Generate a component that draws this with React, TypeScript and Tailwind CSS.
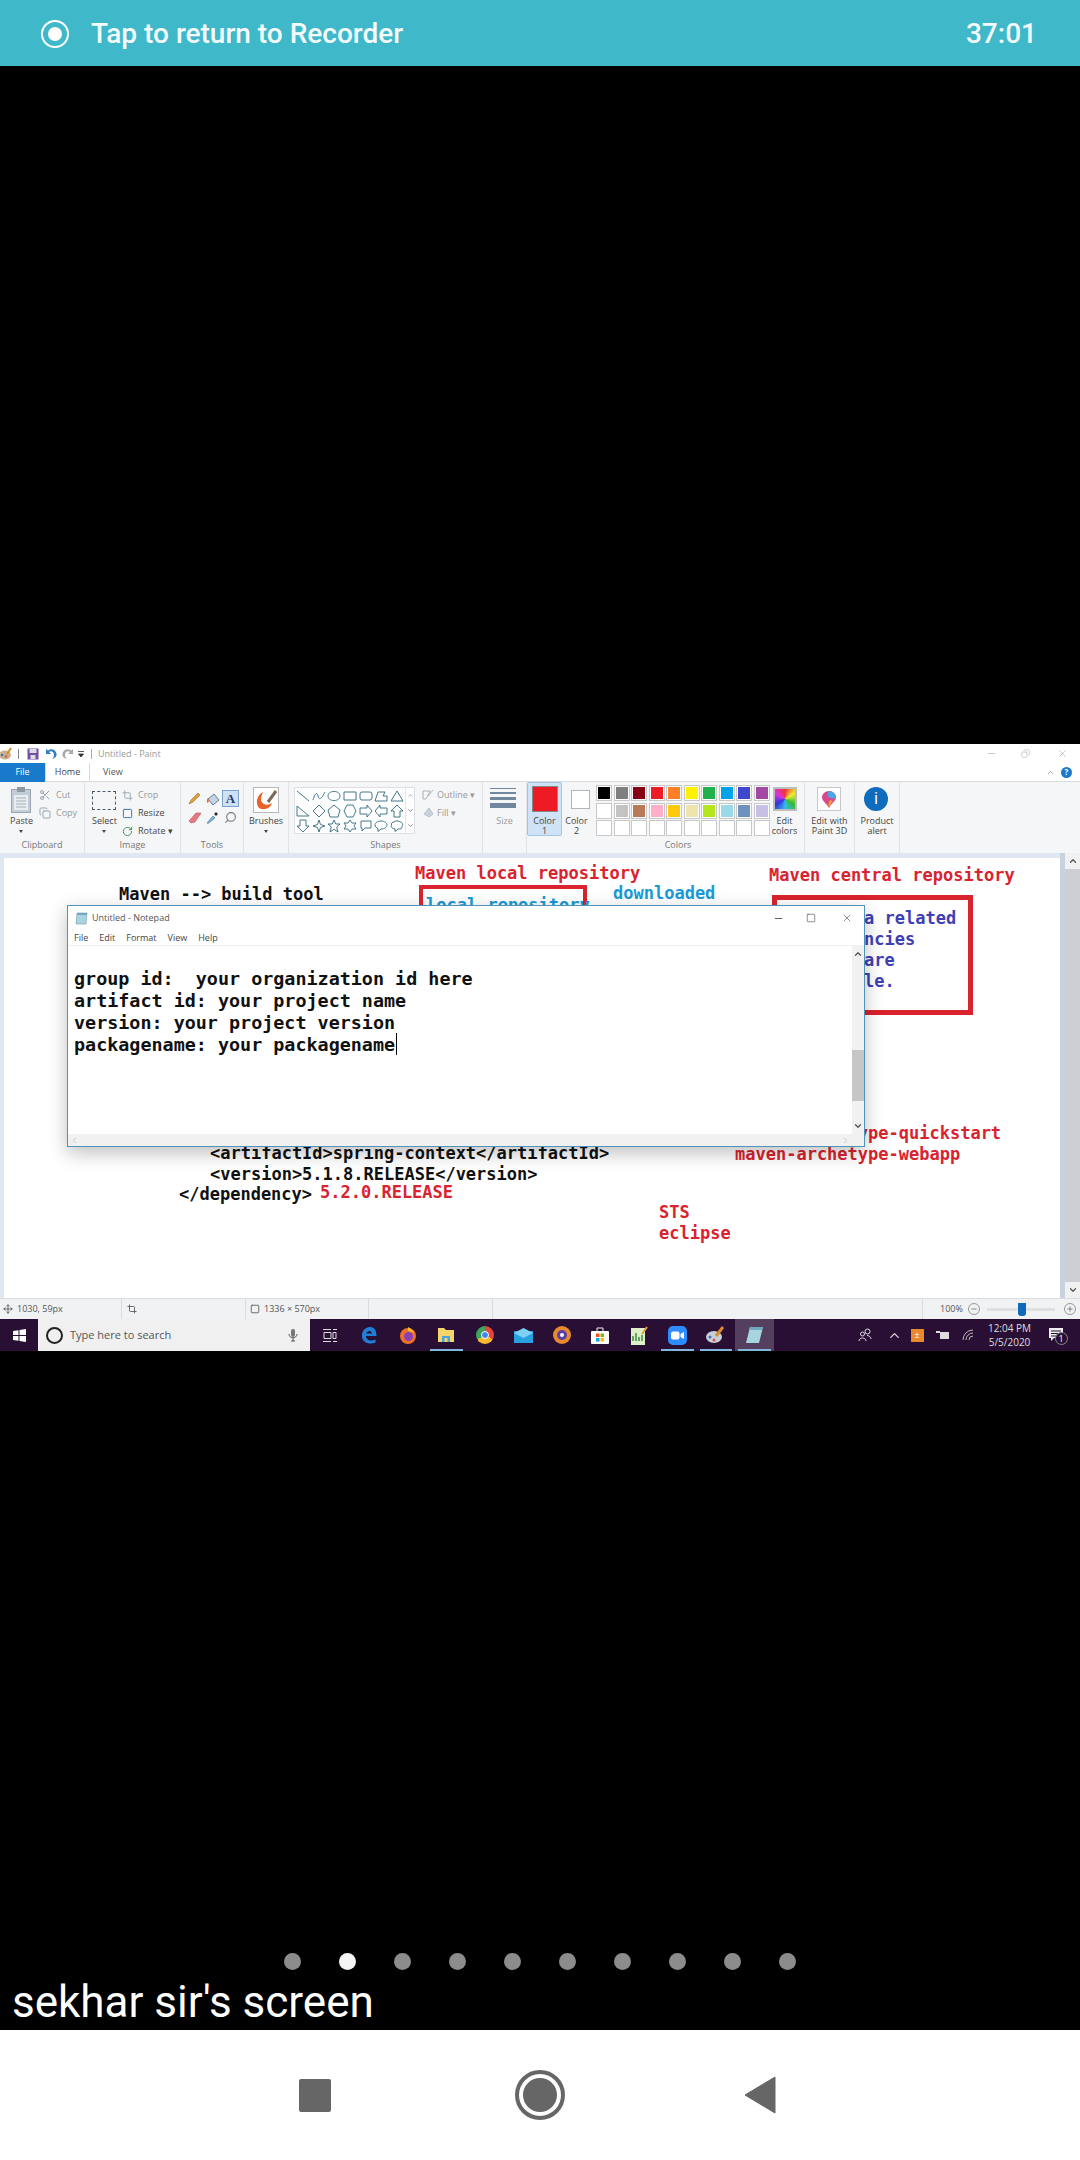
import { ChevronDown, ChevronLeft, ChevronRight, ChevronUp, Copy, Crop, Minus, Move, Plus, RotateCw, Scissors, Search, Square, X } from 'lucide-react'

const row1 = ['#000000', '#7f7f7f', '#880015', '#ed1c24', '#ff7f27', '#fff200', '#22b14c', '#00a2e8', '#3f48cc', '#a349a4']
const row2 = ['#ffffff', '#c3c3c3', '#b97a57', '#ffaec9', '#ffc90e', '#efe4b0', '#b5e61d', '#99d9ea', '#7092be', '#c8bfe7']
const row3 = ['', '', '', '', '', '', '', '', '', '']

// paint shapes gallery, 14x14 each
const shapes = [
  'M1 2L13 12',
  'M1 11C3 4 5 3 6 7S9 11 13 3',
  'M7 2.5C11 2.5 13 4.5 13 7S11 11.5 7 11.5 1 9.5 1 7 3 2.5 7 2.5Z',
  'M1 3H13V11H1Z',
  'M3 3H11Q13 3 13 5V9Q13 11 11 11H3Q1 11 1 9V5Q1 3 3 3Z',
  'M1 12L4 3H11L9 7H13V12Z',
  'M7 2L13 12H1Z',
  'M1 2L13 12H1Z',
  'M7 1L13 7 7 13 1 7Z',
  'M7 1L13 6 11 13H3L1 6Z',
  'M4 1H10L13 7 10 13H4L1 7Z',
  'M1 4H8V1L13 7 8 13V10H1Z',
  'M13 4H6V1L1 7 6 13V10H13Z',
  'M7 1L13 7H10V13H4V7H1Z',
  'M4 1H10V7H13L7 13 1 7H4Z',
  'M7 1L8.5 5.5 13 7 8.5 8.5 7 13 5.5 8.5 1 7 5.5 5.5Z',
  'M7 1L8.8 5H13L9.7 8 11 13 7 10.3 3 13 4.3 8 1 5H5.2Z',
  'M7 1L9 4H13L11 7 13 10H9L7 13 5 10H1L3 7 1 4H5Z',
  'M2 2H12V9H6L3 12V9H2Z',
  'M7 2C10.500 2 13 3.800 13 6S10.500 10 7 10L4 12.500V9.500C2.200 8.800 1 7.500 1 6 1 3.800 3.500 2 7 2Z',
  'M4 3C5 1.500 9 1.500 10 3 12.500 3 13.500 6 12 7.500 12.500 9.500 10 10.500 8.500 9.800L5 12.500V9.800C2.500 10 .5 8 1.500 6 1 4 2.500 3 4 3Z',
]

function GroupLabel({ children }: { children: string }) {
  return <div className="absolute bottom-[1px] left-0 right-0 text-center text-[9px] leading-[14px] text-[#777]">{children}</div>
}

function SmallAction({ label, dim, children }: { label: string; dim?: boolean; children: React.ReactNode }) {
  return (
    <div className={`flex h-[18px] items-center gap-[3px] text-[9px] ${dim ? 'text-[#999]' : 'text-[#444]'}`}>
      {children}
      <span>{label}</span>
    </div>
  )
}

function PaintTitleBar() {
  return (
    <div className="flex h-[19px] items-center bg-white text-[#9a9a9a]">
      <svg width="13" height="13" viewBox="0 0 13 13" className="ml-[-1px]">
        <ellipse cx="6" cy="8" rx="6" ry="4.500" fill="#c9b48f" />
        <circle cx="3" cy="8" r="1.200" fill="#3f6fc0" />
        <circle cx="7" cy="9.500" r="1.200" fill="#d9534f" />
        <path d="M8 7L12 1" stroke="#d98a2b" strokeWidth="2" />
      </svg>
      <div className="ml-[6px] h-[10px] w-px bg-[#888]" />
      <svg width="12" height="12" viewBox="0 0 12 12" className="ml-[8px]">
        <rect width="11" height="11" x=".5" y=".5" fill="#6e4fa3" />
        <rect width="7" height="4" x="2.500" y="1" fill="#ddd" />
        <rect width="5" height="4" x="3.500" y="7" fill="#ddd" />
      </svg>
      <svg width="12" height="12" viewBox="0 0 12 12" className="ml-[6px]">
        <path d="M1 1V6H6L4 4C6 2.500 9 3.500 9 7 9 8.500 8.500 9.500 7 11 11 10 12 7.500 11.500 5.500 10.500 1.500 6 0 3 2.500Z" fill="#2f7fc8" />
      </svg>
      <svg width="12" height="12" viewBox="0 0 12 12" className="ml-[5px]">
        <path d="M11 1V6H6L8 4C6 2.500 3 3.500 3 7 3 8.500 3.500 9.500 5 11 1 10 0 7.500 .5 5.500 1.500 1.500 6 0 9 2.500Z" fill="#a9a9a9" />
      </svg>
      <svg width="8" height="8" viewBox="0 0 8 8" className="ml-[3px]">
        <path d="M1 1.500H7M1.500 4H6.500L4 7Z" stroke="#333" fill="#333" strokeWidth=".8" />
      </svg>
      <div className="ml-[6px] h-[10px] w-px bg-[#aaa]" />
      <span className="ml-[6px] text-[9px]">Untitled - Paint</span>
      <div className="ml-auto flex items-center">
        <Minus size={11} className="mr-[24px] text-[#888]" strokeWidth={1} />
        <Copy size={9} className="mr-[27px] -scale-x-100 text-[#888]" strokeWidth={1} />
        <X size={11} className="mr-[12px] text-[#888]" strokeWidth={1} />
      </div>
    </div>
  )
}

function PaintTabs() {
  return (
    <div className="flex h-[19px] items-center border-b border-[#dadbdc] bg-white text-[9px]">
      <div className="flex h-[19px] w-[45px] items-center justify-center bg-[#1979ca] text-white">File</div>
      <div className="flex h-[19px] w-[45px] items-center justify-center border-x border-[#dadbdc] text-[#444]">Home</div>
      <div className="ml-[13px] text-[#555]">View</div>
      <div className="ml-auto mr-[8px] flex items-center gap-[6px]">
        <ChevronUp size={9} className="text-[#888]" />
        <div className="flex h-[11px] w-[11px] items-center justify-center rounded-full bg-[#1979ca] text-[8px] font-bold text-white">?</div>
      </div>
    </div>
  )
}

function Ribbon() {
  return (
    <div className="flex h-[71px] bg-[#f5f6f7] text-[#444] [&>div]:relative [&>div]:shrink-0">
      <div className="w-[85px] border-r border-[#e2e3e4]">
        <svg width="20" height="26" viewBox="0 0 20 26" className="absolute left-[11px] top-[5px]">
          <rect x=".5" y="2.500" width="19" height="23" fill="#c3cdd8" stroke="#9aa5b1" />
          <rect x="3" y="8" width="14" height="15" fill="#e9edf2" />
          <path d="M5 11H15M5 14H15M5 17H15M5 20H15" stroke="#a4afba" />
          <rect x="6" y="0" width="8" height="5" fill="#8e98a3" />
        </svg>
        <div className="absolute left-[10px] top-[32px] text-[9px] leading-[14px]">Paste</div>
        <div className="absolute left-[19px] top-[48px] h-0 w-0 border-x-[2.500px] border-t-[3px] border-x-transparent border-t-[#444]" />
        <div className="absolute left-[39px] top-[4px]">
          <SmallAction label="Cut" dim><Scissors size={12} className="mr-[2px] text-[#9aa5b1]" /></SmallAction>
          <SmallAction label="Copy" dim><Copy size={12} className="mr-[2px] text-[#9aa5b1]" /></SmallAction>
        </div>
        <GroupLabel>Clipboard</GroupLabel>
      </div>
      <div className="w-[96px] border-r border-[#e2e3e4]">
        <div className="absolute left-[7px] top-[9px] h-[19px] w-[24px] border border-dashed border-[#4a5a6a]" />
        <div className="absolute left-[7px] top-[32px] text-[9px] leading-[14px]">Select</div>
        <div className="absolute left-[17px] top-[48px] h-0 w-0 border-x-[2.500px] border-t-[3px] border-x-transparent border-t-[#444]" />
        <div className="absolute left-[37px] top-[4px]">
          <SmallAction label="Crop" dim><Crop size={11} className="mr-[2px] text-[#9aa5b1]" /></SmallAction>
          <SmallAction label="Resize"><Square size={11} className="mr-[2px] text-[#2f6aa8]" /></SmallAction>
          <SmallAction label="Rotate ▾"><RotateCw size={11} className="mr-[2px] text-[#3f8a5a]" /></SmallAction>
        </div>
        <GroupLabel>Image</GroupLabel>
      </div>
      <div className="w-[63px] border-r border-[#e2e3e4]">
        <div className="absolute left-[5px] top-[8px] grid grid-cols-3 gap-x-[1px] gap-y-[2px]">
          <div className="flex h-[17px] w-[17px] items-center justify-center">
            <svg width="13" height="13" viewBox="0 0 13 13"><path d="M1 12L3 8 10 1 12 3 5 10Z" fill="#e0a040" stroke="#9a6a20" strokeWidth=".6" /></svg>
          </div>
          <div className="flex h-[17px] w-[17px] items-center justify-center">
            <svg width="14" height="14" viewBox="0 0 14 14"><path d="M2 7L8 2 13 8 7 13Z" fill="#c5d4e4" stroke="#6a7f95" /><path d="M2 6C0 8 1 11 2 11 3 10 3 8 2 6Z" fill="#e0663a" /></svg>
          </div>
          <div className="flex h-[17px] w-[17px] items-center justify-center border border-[#7da2ce] bg-[#cfe0f3] font-['Liberation_Serif',serif] text-[13px] font-bold text-[#1e3a70]">A</div>
          <div className="flex h-[17px] w-[17px] items-center justify-center">
            <svg width="14" height="12" viewBox="0 0 14 12"><path d="M1 9L8 1H13L7 10 3 11Z" fill="#e87880" stroke="#b5555c" strokeWidth=".6" /></svg>
          </div>
          <div className="flex h-[17px] w-[17px] items-center justify-center">
            <svg width="13" height="13" viewBox="0 0 13 13"><path d="M1 12L7 5 9 7 2 12.500Z" fill="#7fb2dc" stroke="#44769f" strokeWidth=".6" /><path d="M8 3L10 1 12 3 10 5Z" fill="#333" /></svg>
          </div>
          <div className="flex h-[17px] w-[17px] items-center justify-center">
            <Search size={13} className="-scale-x-100 text-[#777]" />
          </div>
        </div>
        <GroupLabel>Tools</GroupLabel>
      </div>
      <div className="w-[45px] border-r border-[#e2e3e4]">
        <div className="absolute left-[9px] top-[5px] flex h-[26px] w-[26px] items-center justify-center border border-[#b8b8b8] bg-white">
          <svg width="24" height="24" viewBox="0 0 24 24">
            <path d="M9 4C3 7 1 15 5 20 10 23 17 20 18 15 14 18 8 17 7 12 7 9 8 6 9 4Z" fill="#e8622a" />
            <path d="M14 14L22 3" stroke="#7a6a58" strokeWidth="3" />
          </svg>
        </div>
        <div className="absolute left-0 right-0 top-[32px] text-center text-[9px] leading-[14px]">Brushes</div>
        <div className="absolute left-[20px] top-[48px] h-0 w-0 border-x-[2.500px] border-t-[3px] border-x-transparent border-t-[#444]" />
      </div>
      <div className="w-[194px] border-r border-[#e2e3e4]">
        <div className="absolute left-[5px] top-[5px] flex h-[47px] w-[121px] border border-[#dcdfe3] bg-white">
          <div className="grid w-[110px] grid-cols-7">
            {shapes.map((d, i) => (
              <div key={i} className="flex items-center justify-center">
                <svg width="14" height="14" viewBox="0 0 14 14">
                  <path d={d} fill="none" stroke="#2f6a7f" strokeWidth=".9" />
                </svg>
              </div>
            ))}
          </div>
          <div className="flex flex-1 flex-col items-center justify-around border-l border-[#e6e6e6] text-[#777]">
            <ChevronUp size={7} />
            <ChevronDown size={7} className="text-[#333]" />
            <ChevronDown size={7} className="text-[#333]" />
          </div>
        </div>
        <div className="absolute left-[133px] top-[4px]">
          <SmallAction label="Outline ▾" dim>
            <svg width="12" height="12" viewBox="0 0 12 12"><path d="M1 2H8L4 10H1ZM6 7L11 1" fill="none" stroke="#aab2bb" /></svg>
          </SmallAction>
          <SmallAction label="Fill ▾" dim>
            <svg width="12" height="12" viewBox="0 0 12 12"><path d="M2 7L7 1 11 7 7 10Z" fill="#c9d3dd" stroke="#a3acb6" strokeWidth=".6" /></svg>
          </SmallAction>
        </div>
        <GroupLabel>Shapes</GroupLabel>
      </div>
      <div className="w-[44px] border-r border-[#e2e3e4]">
        <div className="absolute left-[7px] top-[6px] flex w-[26px] flex-col gap-[3px]">
          <div className="h-px bg-[#71879f]" />
          <div className="h-[2px] bg-[#71879f]" />
          <div className="h-[3px] bg-[#71879f]" />
          <div className="h-[5px] bg-[#71879f]" />
        </div>
        <div className="absolute left-0 right-0 top-[32px] text-center text-[9px] leading-[14px] text-[#999]">Size</div>
      </div>
      <div className="h-[54px] w-[35px] rounded-[2px] border border-[#a4c5e6] bg-[#cfe3f7]">
        <div className="absolute left-[4px] top-[3px] h-[26px] w-[26px] border border-[#888] bg-[#ed1c24]" />
        <div className="absolute left-0 right-0 top-[33px] text-center text-[9px] leading-[10px]">Color<br />1</div>
      </div>
      <div className="w-[29px]">
        <div className="absolute left-[9px] top-[8px] h-[19px] w-[19px] border border-[#b5b5b5] bg-white" />
        <div className="absolute left-0 right-0 top-[34px] text-center text-[9px] leading-[10px]">Color<br />2</div>
      </div>
      <div className="w-[174px]">
        <div className="absolute left-[5px] top-[3px] flex flex-col gap-[1.500px]">
          {[row1, row2, row3].map((row, r) => (
            <div key={r} className="flex gap-[1.500px]">
              {row.map((c, i) => (
                <div key={i} className="h-[16px] w-[16px] border border-[#c8c8c8] bg-white p-[1px]">
                  {c && <div className="h-full w-full" style={{ backgroundColor: c }} />}
                </div>
              ))}
            </div>
          ))}
        </div>
        <GroupLabel>Colors</GroupLabel>
      </div>
      <div className="w-[40px] border-r border-[#e2e3e4]">
        <div className="absolute left-[8px] top-[5px] h-[24px] w-[24px] border-2 border-[#bdbdbd] bg-[conic-gradient(#e33,#ee3,#3b3,#3be,#33d,#d3d,#e33)]" />
        <div className="absolute left-0 right-0 top-[34px] text-center text-[9px] leading-[10px]">Edit<br />colors</div>
      </div>
      <div className="w-[50px] border-r border-[#e2e3e4]">
        <div className="absolute left-[12px] top-[5px] flex h-[24px] w-[24px] items-center justify-center border border-[#c8c8c8] bg-white">
          <svg width="16" height="19" viewBox="0 0 16 19">
            <path d="M8 1C12 1 15 4 15 7.500 15 11 10.500 13 8 18 5.500 13 1 11 1 7.500 1 4 4 1 8 1Z" fill="#d9478f" />
            <path d="M8 1C12 1 15 4 15 7.500 13 9 9 9 7 6 6.500 4 7 2 8 1Z" fill="#4aa8e8" />
            <path d="M8 18C7 15 7 12 9 10L12 11C10.500 13 9 15 8 18Z" fill="#f0a030" />
          </svg>
        </div>
        <div className="absolute left-0 right-0 top-[34px] text-center text-[9px] leading-[10px]">Edit with<br />Paint 3D</div>
      </div>
      <div className="w-[45px] border-r border-[#e2e3e4]">
        <div className="absolute left-[9px] top-[5px] flex h-[24px] w-[24px] items-center justify-center rounded-full bg-[#0f6cbd] font-['Liberation_Sans',sans-serif] text-[16px] text-white">i</div>
        <div className="absolute left-0 right-0 top-[34px] text-center text-[9px] leading-[10px]">Product<br />alert</div>
      </div>
    </div>
  )
}

function Notepad() {
  return (
    <div className="absolute left-[63px] top-[47px] flex h-[242px] w-[798px] flex-col border border-[#4f94b8] bg-white font-['Open_Sans',sans-serif] text-[9px] font-normal whitespace-normal shadow-[0_6px_18px_rgba(0,0,0,0.25)]">
      <div className="flex h-[23px] items-center pl-[7px] pt-[1px] text-[#555]">
        <svg width="13" height="13" viewBox="0 0 13 13">
          <path d="M2 1H12L11 12H1Z" fill="#a8d4e0" stroke="#7a9aa8" strokeWidth=".6" />
          <path d="M2 1H12V3H2Z" fill="#6fa8c0" />
        </svg>
        <span className="ml-[4px]">Untitled - Notepad</span>
        <div className="ml-auto flex items-center">
          <Minus size={11} className="mr-[22px] text-[#111]" strokeWidth={1.500} />
          <Square size={10} className="mr-[25px] text-[#222]" strokeWidth={1.200} />
          <X size={12} className="mr-[11px] text-[#222]" strokeWidth={1} />
        </div>
      </div>
      <div className="flex h-[17px] gap-[11px] border-b border-[#f0f0f0] pl-[6px] leading-[17px] text-[#444]">
        <span>File</span>
        <span>Edit</span>
        <span>Format</span>
        <span>View</span>
        <span>Help</span>
      </div>
      <div className="flex min-h-0 flex-1">
        <div className="flex-1 whitespace-pre pl-[6px] pt-[22px] font-['DejaVu_Sans_Mono',monospace] text-[18.400px] font-bold leading-[22px] text-[#111]">
          <div>group id:  your organization id here</div>
          <div>artifact id: your project name</div>
          <div>version: your project version</div>
          <div className="relative w-fit">
            packagename: your packagename
            <div className="absolute right-[-2px] top-[-1px] h-[22px] w-px bg-black" />
          </div>
        </div>
        <div className="flex w-[12px] flex-col items-center justify-between bg-[#f1f1f1] py-[3px] text-[#555]">
          <ChevronUp size={10} strokeWidth={3} />
          <div className="mt-[70px] h-[51px] w-full bg-[#c6c6c6]" />
          <ChevronDown size={10} strokeWidth={3} />
        </div>
      </div>
      <div className="flex h-[12px] items-center justify-between bg-[#f1f1f1] px-[2px] text-[#bbb]">
        <ChevronLeft size={9} />
        <ChevronRight size={9} className="mr-[12px]" />
      </div>
    </div>
  )
}

function CanvasArea() {
  return (
    <div className="flex h-[445px] bg-[#dfe7f3]">
      <div className="relative mb-0 ml-[4px] mt-[5px] flex-1 overflow-hidden bg-white font-['DejaVu_Sans_Mono',monospace] text-[17px] font-bold leading-[20px] whitespace-pre">
        <div className="absolute left-[115px] top-[26px] text-[#111]">Maven --&gt; build tool</div>
        <div className="absolute left-[411px] top-[5px] text-[#d9232e]">Maven local repository</div>
        <div className="absolute left-[415px] top-[27px] h-[60px] w-[168px] border-[4px] border-[#d9232e]" />
        <div className="absolute left-[422px] top-[37px] text-[#1a9ad6]">local repository</div>
        <div className="absolute left-[609px] top-[25px] text-[#1a9ad6]">downloaded</div>
        <div className="absolute left-[765px] top-[7px] text-[#d9232e]">Maven central repository</div>
        <div className="absolute left-[768px] top-[37px] h-[120px] w-[201px] border-[5px] border-[#d9232e]" />
        <div className="absolute left-[860px] top-[50px] text-[#3f3fb5]">a related</div>
        <div className="absolute left-[860px] top-[71px] text-[#3f3fb5]">ncies</div>
        <div className="absolute left-[860px] top-[92px] text-[#3f3fb5]">are</div>
        <div className="absolute left-[860px] top-[113px] text-[#3f3fb5]">le.</div>
        <div className="absolute left-[731px] top-[265px] text-[#d9232e]">maven-archetype-quickstart</div>
        <div className="absolute left-[731px] top-[286px] text-[#d9232e]">maven-archetype-webapp</div>
        <div className="absolute left-[206px] top-[285px] text-[#111]">&lt;artifactId&gt;spring-context&lt;/artifactId&gt;</div>
        <div className="absolute left-[206px] top-[306px] text-[#111]">&lt;version&gt;5.1.8.RELEASE&lt;/version&gt;</div>
        <div className="absolute left-[175px] top-[326px] text-[#111]">&lt;/dependency&gt;</div>
        <div className="absolute left-[316px] top-[324px] text-[#d9232e]">5.2.0.RELEASE</div>
        <div className="absolute left-[655px] top-[344px] text-[#d9232e]">STS</div>
        <div className="absolute left-[655px] top-[365px] text-[#d9232e]">eclipse</div>
        <Notepad />
      </div>
      <div className="w-[5px] bg-[#c9d3e0]" />
      <div className="flex w-[15px] flex-col items-center justify-between bg-[#cdcfd2] text-[#555]">
        <div className="flex h-[16px] w-full items-center justify-center bg-[#f1f1f1]">
          <ChevronUp size={10} strokeWidth={3} />
        </div>
        <div className="flex h-[16px] w-full items-center justify-center bg-[#f1f1f1]">
          <ChevronDown size={10} strokeWidth={3} />
        </div>
      </div>
    </div>
  )
}

function StatusBar() {
  return (
    <div className="flex h-[21px] items-center border-t border-[#dadbdc] bg-[#f1f2f3] text-[9px] text-[#555]">
      <div className="flex h-full w-[122px] items-center gap-[4px] border-r border-[#dcdcdc] pl-[3px]">
        <Move size={10} />
        <span>1030, 59px</span>
      </div>
      <div className="flex h-full w-[124px] items-center border-r border-[#dcdcdc] pl-[5px]">
        <Crop size={10} />
      </div>
      <div className="flex h-full w-[123px] items-center gap-[4px] border-r border-[#dcdcdc] pl-[4px]">
        <Square size={10} />
        <span>1336 × 570px</span>
      </div>
      <div className="h-full w-[124px] border-r border-[#dcdcdc]" />
      <div className="h-full w-[430px] border-r border-[#dcdcdc]" />
      <span className="ml-[17px]">100%</span>
      <div className="ml-[5px] flex h-[12px] w-[12px] items-center justify-center rounded-full border border-[#999]">
        <Minus size={8} />
      </div>
      <div className="relative ml-[7px] h-[3px] w-[68px] bg-[#dfe0e1]">
        <div className="absolute left-[31px] top-[-5px] h-[13px] w-[8px] rounded-b-[3px] bg-[#0f6cbd]" />
      </div>
      <div className="ml-[9px] flex h-[12px] w-[12px] items-center justify-center rounded-full border border-[#999]">
        <Plus size={8} />
      </div>
    </div>
  )
}

function TaskIcon({ active, open, children }: { active?: boolean; open?: boolean; children: React.ReactNode }) {
  return (
    <div className={`relative flex h-full w-[38.500px] items-center justify-center ${active ? 'bg-[#54405e]' : ''}`}>
      {children}
      {open && <div className="absolute bottom-0 left-[3px] right-[3px] h-[2px] bg-[#7fb6dc]" />}
    </div>
  )
}

function Taskbar() {
  return (
    <div className="flex h-[32px] items-center bg-[#2a0f35] text-white">
      <div className="flex h-full w-[38px] items-center justify-center">
        <svg width="13" height="13" viewBox="0 0 13 13" fill="#fff">
          <path d="M0 2L5.500 1.200V6H0ZM6.500 1L13 0V6H6.500ZM0 7H5.500V11.800L0 11ZM6.500 7H13V13L6.500 12Z" />
        </svg>
      </div>
      <div className="flex h-full w-[272px] items-center bg-[#f0f0f0] pl-[8px] text-[11px] text-[#555]">
        <div className="h-[17px] w-[17px] rounded-full border-[2.500px] border-[#222]" />
        <span className="ml-[7px]">Type here to search</span>
        <svg width="10" height="14" viewBox="0 0 10 14" className="ml-auto mr-[12px]">
          <rect x="3" y="1" width="4" height="8" rx="2" fill="#777" />
          <path d="M1 6C1 11 9 11 9 6M5 10V13M3 13H7" fill="none" stroke="#555" />
        </svg>
      </div>
      <div className="flex h-full w-[40px] items-center justify-center">
        <svg width="14" height="13" viewBox="0 0 14 13" fill="none" stroke="#ddd">
          <path d="M0 .5H8M10 .5H14M1 3.500H8V9.500H1ZM0 12.500H8M10 3.500H13V9.500H10ZM10 12.500H14" />
        </svg>
      </div>
      <TaskIcon>
        <svg width="16" height="18" viewBox="0 0 16 18">
          <path d="M1 8C2 3 6 1 9 1 13 1 15.500 4 15.500 10H5C5 14 10 16 14.500 13.500V16.500C9 19 1 17 1 10 1 9 1 8.500 1 8ZM5.200 7.500H11C11 4 6 4 5.200 7.500Z" fill="#1f7fd6" />
        </svg>
      </TaskIcon>
      <TaskIcon>
        <svg width="18" height="18" viewBox="0 0 18 18">
          <circle cx="9" cy="10" r="8" fill="#f0702a" />
          <path d="M9 1C12 3 14 4 15 7 12 5 10 6 9 4Z" fill="#ffc02a" />
          <circle cx="9.500" cy="10.500" r="4.500" fill="#8a3fb5" />
        </svg>
      </TaskIcon>
      <TaskIcon open>
        <svg width="18" height="16" viewBox="0 0 18 16">
          <path d="M1 1H7L9 3H17V15H1Z" fill="#f5d56a" />
          <rect x="5" y="9" width="8" height="6" fill="#4aa3df" />
          <rect x="7.500" y="11" width="3" height="4" fill="#f5d56a" />
        </svg>
      </TaskIcon>
      <TaskIcon>
        <div className="flex h-[18px] w-[18px] items-center justify-center rounded-full bg-[conic-gradient(#e8453c_0_33%,#f9bb2d_33%_66%,#3ba55c_66%_100%)]">
          <div className="h-[8px] w-[8px] rounded-full border border-white bg-[#4285f4]" />
        </div>
      </TaskIcon>
      <TaskIcon>
        <svg width="19" height="15" viewBox="0 0 19 15">
          <rect y="3" width="19" height="12" fill="#29a0e0" />
          <path d="M0 5L9.500 0 19 5 9.500 10Z" fill="#7fd0f5" />
        </svg>
      </TaskIcon>
      <TaskIcon>
        <div className="flex h-[18px] w-[18px] items-center justify-center rounded-full bg-[#e8892a]">
          <div className="flex h-[10px] w-[10px] items-center justify-center rounded-full bg-[#5a3fa8]">
            <div className="h-[4px] w-[4px] rounded-full bg-white" />
          </div>
        </div>
      </TaskIcon>
      <TaskIcon>
        <svg width="18" height="18" viewBox="0 0 18 18">
          <path d="M6 5V2H12V5" fill="none" stroke="#eee" />
          <rect y="5" width="18" height="13" rx="1" fill="#fff" />
          <rect x="5" y="7.500" width="3.500" height="3.500" fill="#f25022" />
          <rect x="9.500" y="7.500" width="3.500" height="3.500" fill="#7fba00" />
          <rect x="5" y="12" width="3.500" height="3.500" fill="#00a4ef" />
          <rect x="9.500" y="12" width="3.500" height="3.500" fill="#ffb900" />
        </svg>
      </TaskIcon>
      <TaskIcon>
        <svg width="18" height="19" viewBox="0 0 18 19">
          <rect x="1" y="2" width="14" height="17" fill="#dff0c8" />
          <path d="M3 15V10M6 15V7M9 15V11M12 15V9" stroke="#3f8a3f" strokeWidth="1.500" />
          <path d="M12 8L17 1" stroke="#e0a030" strokeWidth="2" />
        </svg>
      </TaskIcon>
      <TaskIcon open>
        <div className="flex h-[19px] w-[19px] items-center justify-center rounded-[5px] bg-[#2d8cff]">
          <svg width="13" height="9" viewBox="0 0 13 9" fill="#fff">
            <rect width="8.500" height="8" y=".5" rx="2" />
            <path d="M9.500 3L13 1V8L9.500 6Z" />
          </svg>
        </div>
      </TaskIcon>
      <TaskIcon open>
        <svg width="20" height="18" viewBox="0 0 20 18">
          <ellipse cx="8" cy="11" rx="8" ry="6" fill="#c9cfd6" />
          <circle cx="4" cy="11" r="1.500" fill="#3f6fc0" />
          <circle cx="8" cy="14" r="1.500" fill="#d9534f" />
          <path d="M10 10L17 1" stroke="#d98a2b" strokeWidth="3" />
        </svg>
      </TaskIcon>
      <TaskIcon active open>
        <svg width="17" height="18" viewBox="0 0 17 18">
          <path d="M4 1H17L13 17H0Z" fill="#a8d4e0" />
          <path d="M4 1H17L16 4H3Z" fill="#6fa8c0" />
        </svg>
      </TaskIcon>
      <svg width="14" height="14" viewBox="0 0 14 14" fill="none" stroke="#ddd" className="ml-[84px]">
        <circle cx="9.500" cy="3.500" r="2.500" />
        <circle cx="4.500" cy="6" r="2" />
        <path d="M1 13C1 9 8 9 8 13M9 7.500C11 7.500 13 9 13 11" />
      </svg>
      <ChevronUp size={15} className="ml-[15px] text-[#ddd]" />
      <div className="ml-[9px] flex h-[13px] w-[13px] items-center justify-center bg-[#e8892a] text-[9px] text-white">±</div>
      <svg width="14" height="10" viewBox="0 0 14 10" className="ml-[12px]" fill="#ddd">
        <path d="M0 1H4V3H0ZM4 2H13V9H4Z" />
      </svg>
      <svg width="12" height="12" viewBox="0 0 12 12" className="ml-[12px]" fill="none" stroke="#bbb">
        <path d="M1 11A10 10 0 0 1 11 1M4 11A7 7 0 0 1 11 4M7 11A4 4 0 0 1 11 7" />
      </svg>
      <div className="ml-[11px] w-[50px] text-center text-[10px] leading-[14px] text-[#ddd]">
        <div>12:04 PM</div>
        <div>5/5/2020</div>
      </div>
      <div className="relative ml-[14px]">
        <svg width="15" height="14" viewBox="0 0 15 14">
          <path d="M0 0H14V10H5L2 13V10H0Z" fill="#eee" />
          <path d="M2 3H12M2 5.500H12M2 8H9" stroke="#2a0f35" />
        </svg>
        <div className="absolute left-[6px] top-[4px] flex h-[13px] w-[13px] items-center justify-center rounded-full border border-[#888] bg-[#2a0f35] text-[9px]">1</div>
      </div>
    </div>
  )
}

export default function App() {
  const dots = [0, 1, 2, 3, 4, 5, 6, 7, 8, 9]

  return (
    <div className="flex h-[2160px] w-[1080px] flex-col overflow-hidden bg-black">
      <div className="flex h-[66px] items-center justify-between pt-[2px] bg-[#3fb8ca] pl-[41px] pr-[43px] font-['Roboto',sans-serif] text-[28px] font-medium text-[#f4fbfc]">
        <div className="flex items-center gap-[22px]">
          <div className="flex h-[28px] w-[28px] items-center justify-center rounded-full border-2 border-white">
            <div className="h-[14px] w-[14px] rounded-full bg-white" />
          </div>
          <span>Tap to return to Recorder</span>
        </div>
        <span>37:01</span>
      </div>

      <div className="mt-[678px] flex h-[607px] flex-col overflow-hidden font-['Open_Sans',sans-serif]">
        <PaintTitleBar />
        <PaintTabs />
        <Ribbon />
        <CanvasArea />
        <StatusBar />
        <Taskbar />
      </div>

      <div className="mt-[602px] flex h-[17px] gap-[38px] pl-[284px]">
        {dots.map((d) => (
          <div key={d} className={`h-[17px] w-[17px] rounded-full ${d === 1 ? 'bg-[#f5f5f5]' : 'bg-[#8c8c8c]'}`} />
        ))}
      </div>

      <div className="h-[60px] pl-[12px] font-['Roboto',sans-serif] text-[44px] leading-[64px] text-white">sekhar sir's screen</div>

      <div className="flex flex-1 items-center bg-white pl-[299px]">
        <div className="h-[33px] w-[32px] rounded-[2px] bg-[#666]" />
        <div className="ml-[184px] mr-[179px] flex h-[50px] w-[50px] items-center justify-center rounded-full border-[4px] border-[#666]">
          <div className="h-[34px] w-[34px] rounded-full bg-[#666]" />
        </div>
        <svg width="32" height="38" viewBox="0 0 32 38">
          <path d="M31 1V37L1 19Z" fill="#666" stroke="#666" strokeLinejoin="round" />
        </svg>
      </div>
    </div>
  )
}
